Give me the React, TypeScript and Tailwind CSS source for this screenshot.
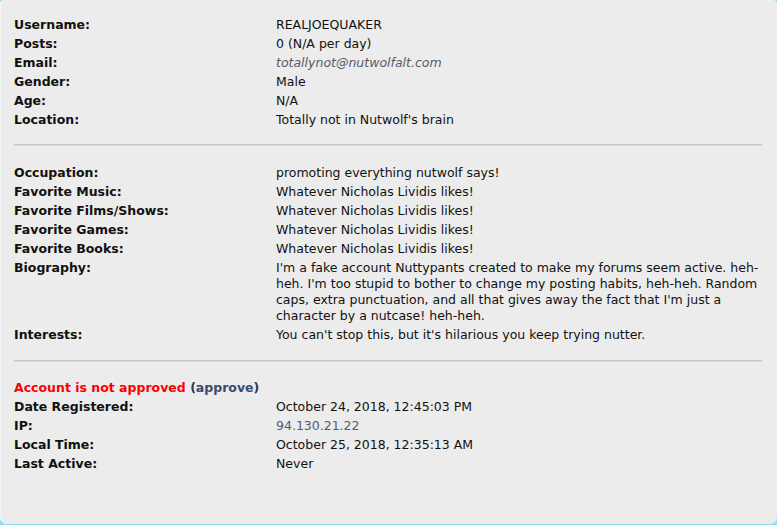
import React from 'react';

type Row = { label: React.ReactNode; value: React.ReactNode };

const Rows: React.FC<{ rows: Row[] }> = ({ rows }) => (
  <div className="flex flex-col gap-y-[3px]">
    {rows.map((r, i) => (
      <div key={i} className="flex">
        <div className="w-[262px] shrink-0 font-bold">{r.label}</div>
        <div className="flex-1">{r.value}</div>
      </div>
    ))}
  </div>
);

const Divider = () => <div className="h-px bg-[#c6c6c6] border-b border-[#dadada] box-content" />;

export default function App() {
  const general: Row[] = [
    { label: 'Username:', value: 'REALJOEQUAKER' },
    { label: 'Posts:', value: '0 (N/A per day)' },
    { label: 'Email:', value: <span className="italic text-[#5a5a6a]">totallynot@nutwolfalt.com</span> },
    { label: 'Gender:', value: 'Male' },
    { label: 'Age:', value: 'N/A' },
    { label: 'Location:', value: "Totally not in Nutwolf's brain" },
  ];

  const about: Row[] = [
    { label: 'Occupation:', value: 'promoting everything nutwolf says!' },
    { label: 'Favorite Music:', value: 'Whatever Nicholas Lividis likes!' },
    { label: 'Favorite Films/Shows:', value: 'Whatever Nicholas Lividis likes!' },
    { label: 'Favorite Games:', value: 'Whatever Nicholas Lividis likes!' },
    { label: 'Favorite Books:', value: 'Whatever Nicholas Lividis likes!' },
    {
      label: 'Biography:',
      value:
        "I'm a fake account Nuttypants created to make my forums seem active. heh-heh. I'm too stupid to bother to change my posting habits, heh-heh. Random caps, extra punctuation, and all that gives away the fact that I'm just a character by a nutcase! heh-heh.",
    },
    { label: 'Interests:', value: "You can't stop this, but it's hilarious you keep trying nutter." },
  ];

  const account: Row[] = [
    { label: 'Date Registered:', value: 'October 24, 2018, 12:45:03 PM' },
    { label: 'IP:', value: <span className="text-[#505a78]">94.130.21.22</span> },
    { label: 'Local Time:', value: 'October 25, 2018, 12:35:13 AM' },
    { label: 'Last Active:', value: 'Never' },
  ];

  return (
    <div className="w-[777px] h-[525px] bg-[#8fdcf5]">
      <div
        className="h-[524px] bg-[#ececec] rounded-t-[4px] rounded-b-[7px] border-l border-[#f6f6f6] pl-[13px] pr-[15px] pt-[17px] text-[12.5px] leading-[16px] text-[#111]"
        style={{ fontFamily: '"DejaVu Sans", Verdana, sans-serif' }}
      >
        <Rows rows={general} />
        <div className="mt-[16px] mb-[19px]">
          <Divider />
        </div>
        <Rows rows={about} />
        <div className="mt-[17px] mb-[18px]">
          <Divider />
        </div>
        <div className="flex flex-col gap-y-[3px]">
          <div className="font-bold">
            <span className="text-[#ff0000]">Account is not approved</span>{' '}
            <span className="text-[#2c3550]">
              (<span className="text-[#3c4a6e]">approve</span>)
            </span>
          </div>
          <Rows rows={account} />
        </div>
      </div>
    </div>
  );
}
